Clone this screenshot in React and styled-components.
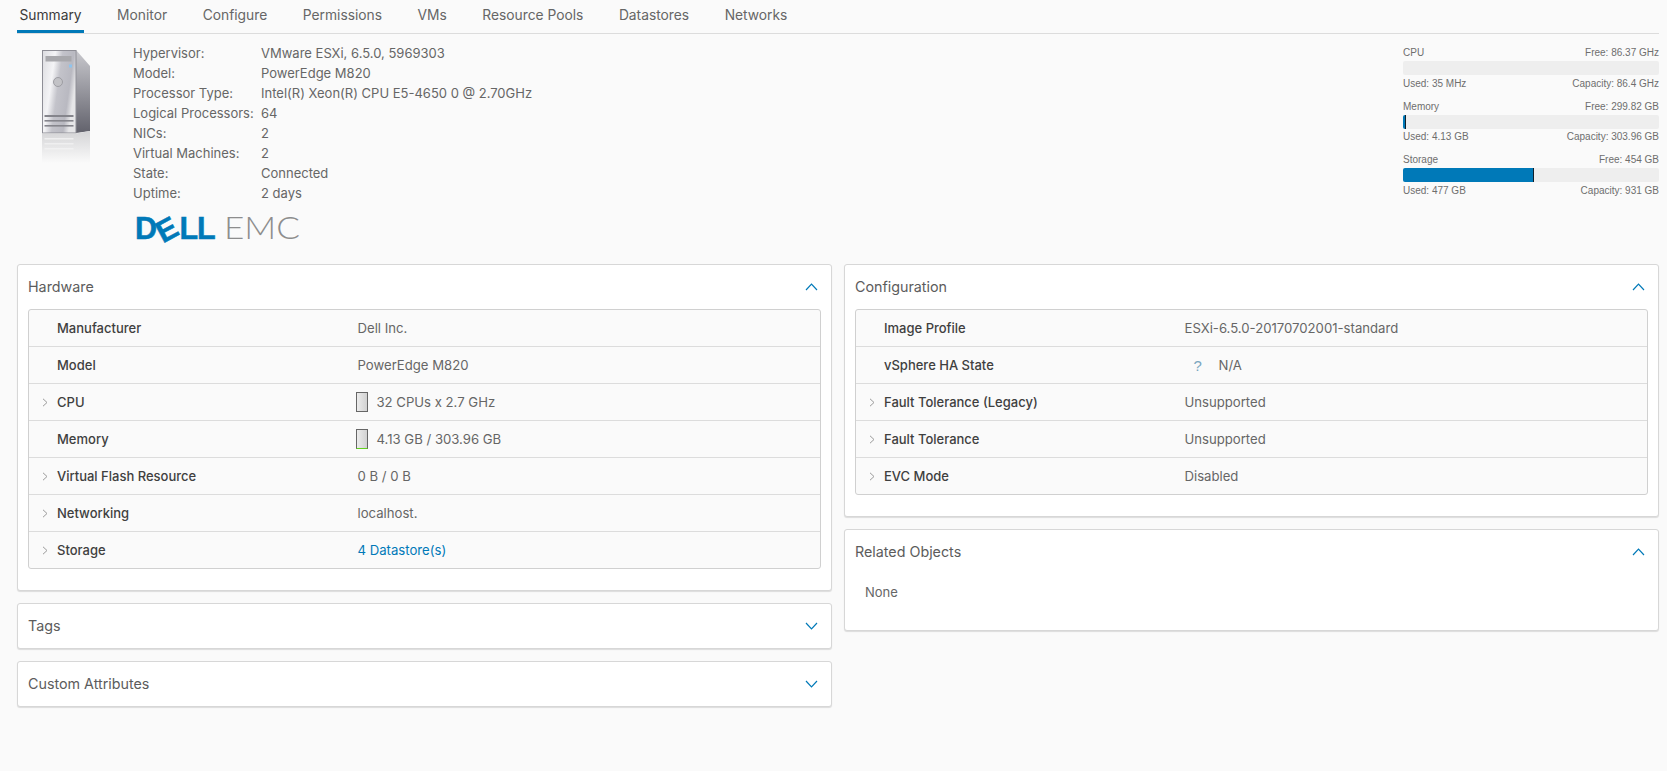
import React from "react";
import styled, { createGlobalStyle } from "styled-components";

const Global = createGlobalStyle`
  html, body { margin: 0; padding: 0; background: #fafafa; }
  body { font-family: Inter, "Noto Sans", sans-serif; font-size: 13px; color: #565656; }
  * { box-sizing: border-box; }
`;

const Page = styled.div`
  min-height: 771px;
  padding: 0 8px 0 17px;
  background: #fafafa;
`;

const Tabs = styled.nav`
  display: flex;
  gap: 30.5px;
  height: 34px;
  border-bottom: 1px solid #dcdcdc;
`;

const Tab = styled.a`
  height: 33px;
  padding: 0 2.5px;
  font-size: 13.8px;
  line-height: 30px;
  color: ${(p) => (p.$active ? "#3a3a3a" : "#666")};
  border-bottom: 3px solid ${(p) => (p.$active ? "#0079b8" : "transparent")};
  white-space: nowrap;
`;

const Header = styled.section`
  display: flex;
  height: 230px;
`;

const ServerArt = styled.svg`
  flex: none;
  width: 48px;
  height: 115px;
  margin: 16px 0 0 25px;
`;

const Info = styled.div`
  margin: 9px 0 0 43px;
`;

const InfoGrid = styled.dl`
  display: grid;
  grid-template-columns: 128px auto;
  grid-auto-rows: 20px;
  margin: 0;
  font-size: 13px;
  line-height: 20px;
  color: #666;
`;

const InfoKey = styled.dt``;
const InfoVal = styled.dd`
  margin: 0;
`;

const LogoArt = styled.svg`
  display: block;
  width: 172px;
  height: 44px;
  margin: 5px 0 0 2px;
`;

const Stats = styled.aside`
  flex: none;
  width: 256px;
  margin: 11px 0 0 auto;
  font-family: "Liberation Sans", Arial, sans-serif;
  font-size: 10px;
  color: #6e6e6e;
`;

const Stat = styled.div`
  height: 53.7px;
`;

const StatTop = styled.div`
  display: flex;
  justify-content: space-between;
  height: 16px;
  line-height: 15px;
`;

const StatBottom = styled.div`
  display: flex;
  justify-content: space-between;
  height: 15px;
  padding-top: 0.5px;
  line-height: 15px;
`;

const Track = styled.div`
  height: 14px;
  border-radius: 2px;
  background: #eee;
  overflow: hidden;
`;

const Fill = styled.div`
  height: 100%;
  background: #0079b8;
  border-right: 1px solid #10202c;
`;

const Columns = styled.main`
  display: grid;
  grid-template-columns: 1fr 1fr;
  gap: 12px;
`;

const Column = styled.div`
  display: flex;
  flex-direction: column;
  gap: 12px;
`;

const Card = styled.section`
  background: #fff;
  border: 1px solid #d7d7d7;
  border-radius: 3px;
  box-shadow: 0 1px 1px rgba(0, 0, 0, 0.12);
  padding: 0 10px ${(p) => p.$pad || 0}px;
`;

const CardHead = styled.header`
  display: flex;
  align-items: center;
  justify-content: space-between;
  height: 44px;
  padding: 0 3px 2px 0;
  font-size: 14.3px;
  color: #5c5c5c;
`;

const Table = styled.div`
  border: 1px solid #d0d0d0;
  border-radius: 3px;
  background: #fafafa;
`;

const Row = styled.div`
  display: grid;
  grid-template-columns: 328.5px 1fr;
  height: 37px;
  align-items: center;
  border-top: 1px solid #dcdcdc;
  &:first-child { border-top: 0; height: 36px; }
`;

const Label = styled.div`
  display: flex;
  align-items: center;
  padding-left: 13px;
  font-size: 13px;
  font-weight: 500;
  color: #3f3f3f;
`;

const ArrowSlot = styled.span`
  display: inline-flex;
  width: 15px;
  flex: none;
`;

const Value = styled.div`
  display: flex;
  align-items: center;
  font-size: 13.15px;
  color: #666;
`;

const Link = styled.a`
  color: #0079b8;
`;

const Meter = styled.span`
  display: block;
  flex: none;
  width: 12px;
  height: 20px;
  margin: 0 9px 0 -2px;
  border: 1px solid #666;
  background: linear-gradient(90deg, #ececec, #d2d2d2);
  ${(p) => p.$green && "border-bottom: 1px solid #62d01f;"}
`;

const Help = styled.span`
  width: 34px;
  padding-left: 9px;
  font-family: "Liberation Sans", sans-serif;
  font-size: 15px;
  color: #7ba6bf;
`;

const None = styled.div`
  padding: 10px 10px 30px;
  font-size: 13px;
  color: #666;
`;

const ChevronArt = styled.svg`
  flex: none;
  margin-top: 2px;
`;

const Chevron = ({ dir }) => (
  <ChevronArt width="13" height="8" viewBox="0 0 13 8" fill="none" stroke="#0079b8" strokeWidth="1.2">
    <polyline points={dir === "up" ? "1,7 6.5,1.2 12,7" : "1,1 6.5,6.8 12,1"} />
  </ChevronArt>
);

const RowArrow = () => (
  <svg width="6" height="9" viewBox="0 0 6 9" fill="none" stroke="#9a9a9a" strokeWidth="1">
    <polyline points="1,0.8 5,4.5 1,8.2" />
  </svg>
);

const Server = () => (
  <ServerArt viewBox="0 0 48 115">
    <defs>
      <linearGradient id="front" x1="0" y1="0" x2="1" y2="0.35">
        <stop offset="0" stopColor="#dcdce0" />
        <stop offset="0.35" stopColor="#f4f4f6" />
        <stop offset="0.55" stopColor="#c3c3ca" />
        <stop offset="0.85" stopColor="#b9b9c1" />
        <stop offset="1" stopColor="#e6e6e8" />
      </linearGradient>
      <linearGradient id="side" x1="0" y1="0" x2="0" y2="1">
        <stop offset="0" stopColor="#c9c9ce" />
        <stop offset="1" stopColor="#62626c" />
      </linearGradient>
      <linearGradient id="reflF" x1="0" y1="0" x2="0" y2="1">
        <stop offset="0" stopColor="#d4d4d6" />
        <stop offset="1" stopColor="#fafafa" />
      </linearGradient>
    </defs>
    <polygon points="34,0 48,16 48,81 34,83" fill="url(#side)" />
    <rect x="0.5" y="0.5" width="33.5" height="82.5" fill="url(#front)" stroke="#8e8e96" />
    <rect x="3.5" y="6" width="26" height="5.5" fill="#a8a8ac" />
    <rect x="27" y="14.5" width="3" height="3" fill="#8ec4ee" />
    <circle cx="16" cy="32" r="4.5" fill="#c2c2c6" stroke="#9d9da3" />
    <rect x="2.5" y="65" width="29" height="2" fill="#85858c" />
    <rect x="2.5" y="70" width="29" height="1.6" fill="#85858c" />
    <rect x="2.5" y="75" width="29" height="1.6" fill="#85858c" />
    <polygon points="0,83.5 34,83.5 48,81 48,113 0,113" fill="url(#reflF)" />
    <rect x="2.5" y="88" width="29" height="1.5" fill="#efeff0" />
    <rect x="2.5" y="93" width="29" height="1.5" fill="#efeff0" />
    <rect x="2.5" y="98" width="29" height="1.5" fill="#f1f1f2" />
  </ServerArt>
);

const Logo = () => (
  <LogoArt viewBox="0 0 172 44">
    <g fontFamily="Liberation Sans, sans-serif" fontWeight="700" fontSize="30.5" fill="#0079b8" stroke="#0079b8" strokeWidth="0.5">
      <text x="0" y="31">D</text>
      <g transform="translate(31.5 21) rotate(-28)">
        <text x="0" y="11" textAnchor="middle">E</text>
      </g>
      <text x="44.5" y="31">L</text>
      <text x="62" y="31">L</text>
    </g>
    <text x="89" y="31" fontFamily="Lato, sans-serif" fontWeight="300" fontSize="32" fill="#8d8d8d" textLength="76" lengthAdjust="spacingAndGlyphs">EMC</text>
  </LogoArt>
);

const tabs = ["Summary", "Monitor", "Configure", "Permissions", "VMs", "Resource Pools", "Datastores", "Networks"];
const info = [
  ["Hypervisor:", "VMware ESXi, 6.5.0, 5969303"],
  ["Model:", "PowerEdge M820"],
  ["Processor Type:", "Intel(R) Xeon(R) CPU E5-4650 0 @ 2.70GHz"],
  ["Logical Processors:", "64"],
  ["NICs:", "2"],
  ["Virtual Machines:", "2"],
  ["State:", "Connected"],
  ["Uptime:", "2 days"],
];
const stats = [
  { name: "CPU", free: "86.37 GHz", used: "35 MHz", cap: "86.4 GHz", pct: 0 },
  { name: "Memory", free: "299.82 GB", used: "4.13 GB", cap: "303.96 GB", pct: 1.36 },
  { name: "Storage", free: "454 GB", used: "477 GB", cap: "931 GB", pct: 51.2 },
];

const TableRow = ({ label, arrow, children }) => (
  <Row>
    <Label>
      <ArrowSlot>{arrow && <RowArrow />}</ArrowSlot>
      {label}
    </Label>
    <Value>{children}</Value>
  </Row>
);

export default function App() {
  return (
    <Page>
      <Global />
      <Tabs>
        {tabs.map((t, i) => (
          <Tab key={t} $active={i === 0}>{t}</Tab>
        ))}
      </Tabs>
      <Header>
        <Server />
        <Info>
          <InfoGrid>
            {info.map(([k, v]) => (
              <React.Fragment key={k}>
                <InfoKey>{k}</InfoKey>
                <InfoVal>{v}</InfoVal>
              </React.Fragment>
            ))}
          </InfoGrid>
          <Logo />
        </Info>
        <Stats>
          {stats.map((s) => (
            <Stat key={s.name}>
              <StatTop><span>{s.name}</span><span>Free: {s.free}</span></StatTop>
              <Track>{s.pct > 0 && <Fill style={{ width: `${s.pct}%` }} />}</Track>
              <StatBottom><span>Used: {s.used}</span><span>Capacity: {s.cap}</span></StatBottom>
            </Stat>
          ))}
        </Stats>
      </Header>
      <Columns>
        <Column>
          <Card $pad={21}>
            <CardHead>Hardware<Chevron dir="up" /></CardHead>
            <Table>
              <TableRow label="Manufacturer">Dell Inc.</TableRow>
              <TableRow label="Model">PowerEdge M820</TableRow>
              <TableRow label="CPU" arrow><Meter />32 CPUs x 2.7 GHz</TableRow>
              <TableRow label="Memory"><Meter $green />4.13 GB / 303.96 GB</TableRow>
              <TableRow label="Virtual Flash Resource" arrow>0 B / 0 B</TableRow>
              <TableRow label="Networking" arrow>localhost.</TableRow>
              <TableRow label="Storage" arrow><Link>4 Datastore(s)</Link></TableRow>
            </Table>
          </Card>
          <Card>
            <CardHead>Tags<Chevron dir="down" /></CardHead>
          </Card>
          <Card>
            <CardHead>Custom Attributes<Chevron dir="down" /></CardHead>
          </Card>
        </Column>
        <Column>
          <Card $pad={21}>
            <CardHead>Configuration<Chevron dir="up" /></CardHead>
            <Table>
              <TableRow label="Image Profile">ESXi-6.5.0-20170702001-standard</TableRow>
              <TableRow label="vSphere HA State"><Help>?</Help>N/A</TableRow>
              <TableRow label="Fault Tolerance (Legacy)" arrow>Unsupported</TableRow>
              <TableRow label="Fault Tolerance" arrow>Unsupported</TableRow>
              <TableRow label="EVC Mode" arrow>Disabled</TableRow>
            </Table>
          </Card>
          <Card>
            <CardHead>Related Objects<Chevron dir="up" /></CardHead>
            <None>None</None>
          </Card>
        </Column>
      </Columns>
    </Page>
  );
}
